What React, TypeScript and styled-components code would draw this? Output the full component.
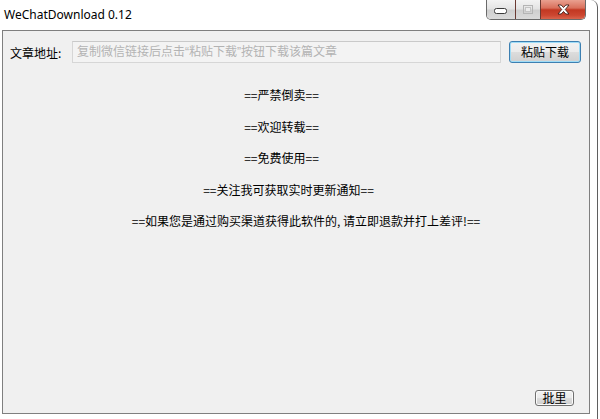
import React from 'react'
import styled, { createGlobalStyle } from 'styled-components'

const GlobalStyle = createGlobalStyle`
  html, body {
    margin: 0;
    padding: 0;
    background: #ffffff;
    overflow: hidden;
  }
  * {
    box-sizing: border-box;
  }
`

const Window = styled.div`
  width: 598px;
  height: 419px;
  background: #ffffff;
  border-right: 1px solid #5f5f5f;
  border-top-right-radius: 7px;
  display: flex;
  flex-direction: column;
`

const TitleBar = styled.div`
  height: 30px;
  display: flex;
  align-items: flex-start;
  padding: 0 11px 0 4px;
`

const Title = styled.div`
  font-family: 'Noto Sans', sans-serif;
  font-size: 12px;
  line-height: 30px;
  color: #000;
`

const CaptionGroup = styled.div`
  margin-left: auto;
  display: flex;
  height: 20px;
  border: 1px solid #6a6a6a;
  border-top: none;
  border-radius: 0 0 5px 5px;
  overflow: hidden;
`

const CaptionButton = styled.div<{ $w: number; $close?: boolean }>`
  width: ${(p) => p.$w}px;
  height: 100%;
  display: flex;
  align-items: center;
  justify-content: center;
  & + & {
    border-left: 1px solid ${(p) => (p.$close ? '#6b3a32' : '#9a9a9a')};
  }
  background: ${(p) =>
    p.$close
      ? 'linear-gradient(#e9a090 0%, #d9705c 42%, #c23822 52%, #cc4630 80%, #d9644c 100%)'
      : 'linear-gradient(#f3f3f3 0%, #e4e4e4 45%, #cfcfcf 55%, #dadada 100%)'};
`

const Client = styled.div`
  margin-left: 2px;
  width: 588px;
  height: 384px;
  border: 1px solid #7f7f7f;
  background: #f0f0f0;
  display: flex;
  flex-direction: column;
  font-family: 'Noto Sans CJK SC', sans-serif;
  font-size: 12px;
  color: #000;
`

const AddressRow = styled.div`
  display: flex;
  align-items: center;
  gap: 8px;
  padding: 10px 8px 0 7px;
`

const Label = styled.span`
  width: 54px;
  white-space: nowrap;
`

const UrlInput = styled.input`
  flex: 1;
  height: 22px;
  border: 1px solid #d6d6d6;
  border-top-color: #c9c9c9;
  background: #f3f3f3;
  padding: 0 4px;
  font-family: 'Liberation Sans', 'Noto Sans CJK SC', sans-serif;
  font-size: 12px;
  outline: none;
  &::placeholder {
    color: #b3b3b3;
  }
`

const WinButton = styled.button<{ $w: number; $h: number; $focused?: boolean }>`
  width: ${(p) => p.$w}px;
  height: ${(p) => p.$h}px;
  padding: 0;
  border: 1px solid ${(p) => (p.$focused ? '#3c7fb1' : '#707070')};
  border-radius: 3px;
  background: linear-gradient(#f2f2f2 0%, #ebebeb 49%, #dddddd 51%, #cfcfcf 100%);
  box-shadow: inset 0 0 0 1px ${(p) => (p.$focused ? '#9fdcf7' : '#fbfbfb')};
  font-family: 'Noto Sans CJK SC', sans-serif;
  font-size: 12px;
  line-height: ${(p) => p.$h - 2}px;
  color: #000;
  overflow: hidden;
`

const Messages = styled.div`
  margin-top: 16px;
  display: flex;
  flex-direction: column;
`

const Message = styled.div<{ $shift: number }>`
  height: 31.5px;
  line-height: 31.5px;
  text-align: center;
  white-space: nowrap;
  padding-left: ${(p) => Math.max(0, p.$shift * 2)}px;
  padding-right: ${(p) => Math.max(0, -p.$shift * 2)}px;
`

const Footer = styled.div`
  margin-top: auto;
  display: flex;
  justify-content: flex-end;
  padding: 0 15px 7px 0;
`

const messages: [string, number][] = [
  ['==严禁倒卖==', -14.5],
  ['==欢迎转载==', -14.5],
  ['==免费使用==', -14.5],
  ['==关注我可获取实时更新通知==', -7.5],
  ['==如果您是通过购买渠道获得此软件的, 请立即退款并打上差评!==', 10],
]

function MinimizeIcon() {
  return (
    <svg width="14" height="8" viewBox="0 0 14 8">
      <rect x="0.5" y="2.5" width="12" height="5" rx="2" fill="#ffffff" stroke="#3a3a3a" />
    </svg>
  )
}

function MaximizeIcon() {
  return (
    <svg width="10" height="9" viewBox="0 0 10 9">
      <rect x="0.5" y="0.5" width="9" height="8" fill="none" stroke="#b4b4b4" />
      <rect x="2.5" y="2.5" width="5" height="4" fill="#ececec" stroke="#c4c4c4" />
    </svg>
  )
}

function CloseIcon() {
  return (
    <svg width="13" height="11" viewBox="0 0 13 11">
      <path
        d="M1 1 L4.2 1 L6.5 3.5 L8.8 1 L12 1 L8.3 5.5 L12 10 L8.8 10 L6.5 7.5 L4.2 10 L1 10 L4.7 5.5 Z"
        fill="#ffffff"
        stroke="#3e1e18"
        strokeWidth="0.9"
      />
    </svg>
  )
}

export default function App() {
  return (
    <>
      <GlobalStyle />
      <Window>
        <TitleBar>
          <Title>WeChatDownload 0.12</Title>
          <CaptionGroup>
            <CaptionButton $w={28}>
              <MinimizeIcon />
            </CaptionButton>
            <CaptionButton $w={25}>
              <MaximizeIcon />
            </CaptionButton>
            <CaptionButton $w={45} $close>
              <CloseIcon />
            </CaptionButton>
          </CaptionGroup>
        </TitleBar>
        <Client>
          <AddressRow>
            <Label>文章地址:</Label>
            <UrlInput readOnly placeholder="复制微信链接后点击“粘贴下载”按钮下载该篇文章" />
            <WinButton $w={72} $h={22} $focused>
              粘贴下载
            </WinButton>
          </AddressRow>
          <Messages>
            {messages.map(([text, shift]) => (
              <Message key={text} $shift={shift}>
                {text}
              </Message>
            ))}
          </Messages>
          <Footer>
            <WinButton $w={39} $h={16}>
              批里
            </WinButton>
          </Footer>
        </Client>
      </Window>
    </>
  )
}
